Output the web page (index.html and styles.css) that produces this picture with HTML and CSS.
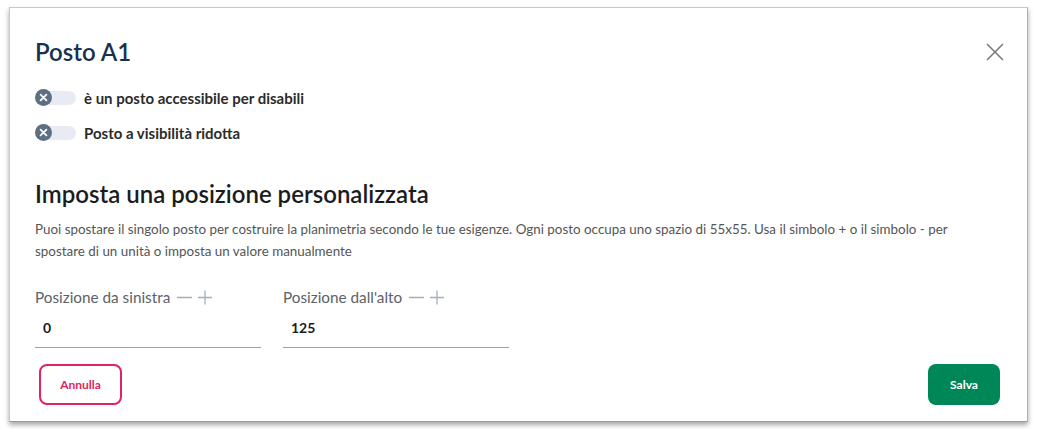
FILE: index.html
```html
<!DOCTYPE html>
<html>
<head lang="it">
    <meta charset="UTF-8">
    <title>Posto A1</title>
    <link rel="stylesheet" href="styles.css">
</head>
<body>
<div class="page">
    <div class="modal">
        <div class="modal-header">
            <h1 class="modal-title">Posto A1</h1>
            <button class="close" type="button" aria-label="Chiudi">
                <svg width="18" height="18" viewBox="0 0 18 18">
                    <path d="M1 1 L17 17 M17 1 L1 17" stroke="#7a7a7a" stroke-width="1.6" fill="none"/>
                </svg>
            </button>
        </div>

        <div class="toggles">
            <label class="toggle">
                <span class="track">
                    <svg class="knob" width="17" height="17" viewBox="0 0 17 17">
                        <circle cx="8.5" cy="8.5" r="8.5" fill="#5d7083"/>
                        <path d="M5.6 5.6 L11.4 11.4 M11.4 5.6 L5.6 11.4" stroke="#fff" stroke-width="1.8" stroke-linecap="round"/>
                    </svg>
                </span>
                <span class="toggle-text">è un posto accessibile per disabili</span>
            </label>
            <label class="toggle">
                <span class="track">
                    <svg class="knob" width="17" height="17" viewBox="0 0 17 17">
                        <circle cx="8.5" cy="8.5" r="8.5" fill="#5d7083"/>
                        <path d="M5.6 5.6 L11.4 11.4 M11.4 5.6 L5.6 11.4" stroke="#fff" stroke-width="1.8" stroke-linecap="round"/>
                    </svg>
                </span>
                <span class="toggle-text">Posto a visibilità ridotta</span>
            </label>
        </div>

        <h2 class="section-title">Imposta una posizione personalizzata</h2>
        <p class="section-text">Puoi spostare il singolo posto per costruire la planimetria secondo le tue esigenze. Ogni posto occupa uno spazio di 55x55. Usa il simbolo + o il simbolo - per spostare di un unità o imposta un valore manualmente</p>

        <div class="fields">
            <div class="field">
                <div class="field-label">
                    Posizione da sinistra
                    <svg class="step" width="37" height="15" viewBox="0 0 37 15">
                        <path d="M1 7.5 H16 M22 7.5 H36 M29 0.5 V14.5" stroke="#a3afbd" stroke-width="1.3" fill="none"/>
                    </svg>
                </div>
                <input class="field-input" type="text" value="0">
            </div>
            <div class="field">
                <div class="field-label">
                    Posizione dall'alto
                    <svg class="step" width="37" height="15" viewBox="0 0 37 15">
                        <path d="M1 7.5 H16 M22 7.5 H36 M29 0.5 V14.5" stroke="#a3afbd" stroke-width="1.3" fill="none"/>
                    </svg>
                </div>
                <input class="field-input" type="text" value="125">
            </div>
        </div>

        <div class="modal-footer">
            <button class="btn btn-outline" type="button">Annulla</button>
            <button class="btn btn-primary" type="button">Salva</button>
        </div>
    </div>
</div>
</body>
</html>
```

FILE: styles.css
```css
* {
    padding: 0;
    margin: 0;
    box-sizing: border-box;
}

body {
    background-color: #fff;
    font-family: "Lato", "Noto Sans", sans-serif;
    color: #333;
}

.page {
    padding: 7px 9px;
}

.modal {
    width: 1019px;
    height: 415px;
    border: 1px solid #c9c9c9;
    border-bottom-color: #9a9a9a;
    border-right-color: #b0b0b0;
    box-shadow: 0 3px 5px rgba(0, 0, 0, 0.35);
    padding: 0 27px 0 25px;
    display: flex;
    flex-direction: column;
}

.modal-header {
    display: flex;
    justify-content: space-between;
    align-items: center;
    padding-top: 28px;
    height: 60px;
}

.modal-title {
    font-size: 24px;
    line-height: 32px;
    font-weight: 600;
    color: #17324d;
}

.close {
    border: none;
    background: none;
    margin-right: -4px;
    width: 18px;
    height: 18px;
}

.close svg {
    display: block;
}

.toggles {
    margin-top: 12px;
}

.toggle {
    display: flex;
    align-items: center;
    height: 35px;
}

.track {
    position: relative;
    width: 41px;
    height: 14px;
}

.track::before {
    content: "";
    position: absolute;
    left: 8px;
    top: 0;
    width: 33px;
    height: 14px;
    border-radius: 7px;
    background-color: #e8ebf3;
}

.knob {
    position: absolute;
    left: 0;
    top: -1.5px;
    display: block;
}

.toggle-text {
    margin-left: 8px;
    font-size: 15px;
    font-weight: 700;
    color: #2b2b2b;
}

.section-title {
    margin-top: 28px;
    font-size: 24px;
    line-height: 32px;
    font-weight: 600;
    color: #1c1c1c;
}

.section-text {
    margin-top: 8px;
    font-size: 13.4px;
    line-height: 22px;
    color: #555;
    width: 940px;
}

.fields {
    margin-top: 24px;
    display: grid;
    grid-template-columns: 226px 226px;
    column-gap: 22px;
}

.field-label {
    display: flex;
    align-items: center;
    height: 22px;
    font-size: 15.3px;
    color: #5c6269;
}

.step {
    margin-left: 6px;
}

.field-input {
    display: block;
    width: 100%;
    height: 40px;
    border: none;
    border-bottom: 1px solid #9aa3ad;
    padding-left: 8px;
    font-family: inherit;
    font-size: 14px;
    font-weight: 700;
    color: #1c1c1c;
    outline: none;
}

.modal-footer {
    margin-top: 16px;
    display: flex;
    justify-content: space-between;
    padding-left: 4px;
}

.btn {
    height: 41px;
    border-radius: 8px;
    font-family: inherit;
    font-size: 12px;
    font-weight: 700;
}

.btn-outline {
    width: 83px;
    border: 2px solid #e0245e;
    background-color: #fff;
    color: #e0245e;
}

.btn-primary {
    width: 72px;
    border: none;
    background-color: #008758;
    color: #fff;
}
```
